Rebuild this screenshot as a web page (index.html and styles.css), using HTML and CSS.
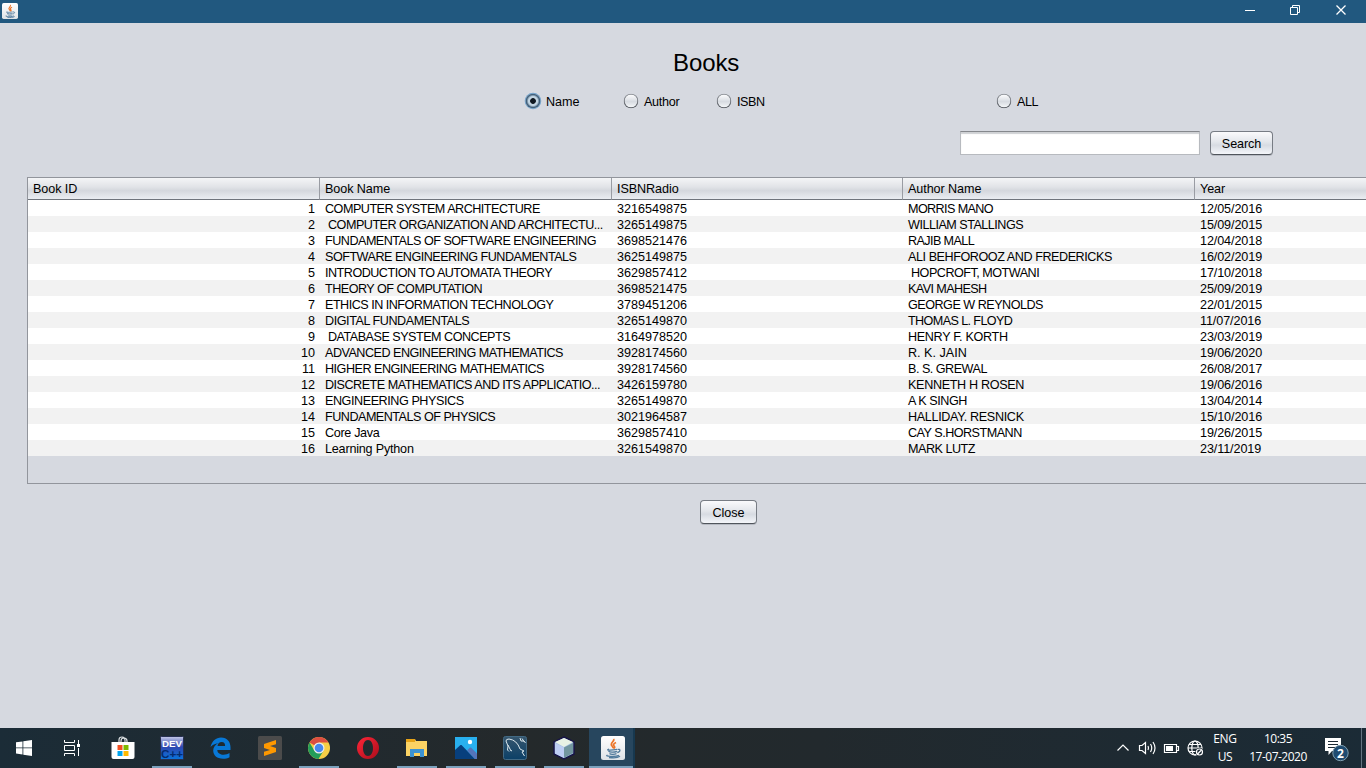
FILE: index.html
```html
<!DOCTYPE html>
<html lang="en">
<head>
<meta charset="utf-8">
<title>Books</title>
<link rel="stylesheet" href="styles.css">
</head>
<body>
<svg class="defs" width="0" height="0">
  <defs>
    <linearGradient id="tile" x2="0" y2="1"><stop stop-color="#fff"/><stop offset="1" stop-color="#dfe3e7"/></linearGradient>
    <linearGradient id="dev" x2="0" y2="1"><stop stop-color="#c7cbe9"/><stop offset=".45" stop-color="#3048b0"/><stop offset="1" stop-color="#0874dc"/></linearGradient>
    <linearGradient id="opera" x2="1" y2="1"><stop stop-color="#ff2638"/><stop offset="1" stop-color="#a90d1b"/></linearGradient>
    <linearGradient id="sql" x2="0" y2="1"><stop stop-color="#36566e"/><stop offset="1" stop-color="#0c4067"/></linearGradient>
    <symbol id="java" viewBox="0 0 24 24">
      <rect width="24" height="24" rx="2.5" fill="url(#tile)"/>
      <path d="M12.500 3c2 2-4.500 4-1.500 7 1 1 1.500 1.500 1 2.500M15 6.500c-3 1.500-3 2.500-1.500 4 .6.8 0 1.500-.5 2" fill="none" stroke="#ec762b" stroke-width="1.700"/>
      <path d="M8 13.200c-4 1 2 1.300 8 .1M7.500 15.200c1 1.300 6 1.300 8.500.2M8.500 17.500c1 1.100 5 1.100 7 .2M16.500 13.500c3-1 3.500 2-.2 3M6.500 19c-4 1.500 8 2.300 11.500.3M8 21.500c4 .6 9 .2 11-1.200" fill="none" stroke="#507a9c" stroke-width="1.300"/>
    </symbol>
  </defs>
</svg>
<header class="titlebar">
  <svg class="app-icon" width="16" height="16"><use href="#java"/></svg>
  <svg class="window-controls" width="138" height="23" fill="none" stroke="#fff">
    <path d="M17 10.500h10M62.500 7.500h7v7h-7zM64.500 7.500v-2h7v7h-2"/><path d="M108.500 5.500l9 9m0-9l-9 9" stroke-width="1.300"/>
  </svg>
</header>
<main class="content">
  <h1>Books</h1>
  <div class="radios">
    <label class="option name"><i class="radio selected"></i><span>Name</span></label>
    <label class="option author"><i class="radio"></i><span>Author</span></label>
    <label class="option isbn"><i class="radio"></i><span>ISBN</span></label>
    <label class="option all"><i class="radio"></i><span>ALL</span></label>
  </div>
  <div class="search"><input class="field" type="text" aria-label="Search text"><button class="button search-button">Search</button></div>
  <section class="table-pane">
    <table>
      <colgroup><col class="c1"><col class="c2"><col class="c3"><col class="c4"><col class="c5"></colgroup>
      <thead><tr><th>Book ID</th><th>Book Name</th><th>ISBNRadio</th><th>Author Name</th><th>Year</th></tr></thead>
      <tbody>
        <tr><td>1</td><td class="tight">COMPUTER SYSTEM ARCHITECTURE</td><td>3216549875</td><td class="tighter">MORRIS MANO</td><td>12/05/2016</td></tr>
        <tr><td>2</td><td class="tight">&nbsp;COMPUTER ORGANIZATION AND ARCHITECTU...</td><td>3265149875</td><td class="tight">WILLIAM STALLINGS</td><td>15/09/2015</td></tr>
        <tr><td>3</td><td class="tight">FUNDAMENTALS OF SOFTWARE ENGINEERING</td><td>3698521476</td><td class="tighter">RAJIB MALL</td><td>12/04/2018</td></tr>
        <tr><td>4</td><td class="tight">SOFTWARE ENGINEERING FUNDAMENTALS</td><td>3625149875</td><td class="medium">ALI BEHFOROOZ AND FREDERICKS</td><td>16/02/2019</td></tr>
        <tr><td>5</td><td class="tight">INTRODUCTION TO AUTOMATA THEORY</td><td>3629857412</td><td class="tight">&nbsp;HOPCROFT, MOTWANI</td><td>17/10/2018</td></tr>
        <tr><td>6</td><td class="tight">THEORY OF COMPUTATION</td><td>3698521475</td><td class="tighter">KAVI MAHESH</td><td>25/09/2019</td></tr>
        <tr><td>7</td><td class="tight">ETHICS IN INFORMATION TECHNOLOGY</td><td>3789451206</td><td class="tight">GEORGE W REYNOLDS</td><td>22/01/2015</td></tr>
        <tr><td>8</td><td class="medium">DIGITAL FUNDAMENTALS</td><td>3265149870</td><td class="tighter">THOMAS L. FLOYD</td><td>11/07/2016</td></tr>
        <tr><td>9</td><td class="tight">&nbsp;DATABASE SYSTEM CONCEPTS</td><td>3164978520</td><td class="loose">HENRY F. KORTH</td><td>23/03/2019</td></tr>
        <tr><td>10</td><td class="tight">ADVANCED ENGINEERING MATHEMATICS</td><td>3928174560</td><td>R. K. JAIN</td><td>19/06/2020</td></tr>
        <tr><td>11</td><td class="tight">HIGHER ENGINEERING MATHEMATICS</td><td>3928174560</td><td class="tight">B. S. GREWAL</td><td>26/08/2017</td></tr>
        <tr><td>12</td><td class="tight">DISCRETE MATHEMATICS AND ITS APPLICATIO...</td><td>3426159780</td><td class="loose">KENNETH H ROSEN</td><td>19/06/2016</td></tr>
        <tr><td>13</td><td class="medium">ENGINEERING PHYSICS</td><td>3265149870</td><td class="medium">A K SINGH</td><td>13/04/2014</td></tr>
        <tr><td>14</td><td class="tight">FUNDAMENTALS OF PHYSICS</td><td>3021964587</td><td class="loose">HALLIDAY. RESNICK</td><td>15/10/2016</td></tr>
        <tr><td>15</td><td class="loose">Core Java</td><td>3629857410</td><td class="tight">CAY S.HORSTMANN</td><td>19/26/2015</td></tr>
        <tr><td>16</td><td class="mixed">Learning Python</td><td>3261549870</td><td class="tight">MARK LUTZ</td><td>23/11/2019</td></tr>
      </tbody>
    </table>
  </section>
  <button class="button close-button">Close</button>
</main>
<footer class="taskbar">
  <div class="slot system"><svg width="16" height="16" fill="#fff"><path d="M0 2.300l6.500-.9v6.100H0zM7.300 1.300L16 0v7.500H7.300zM0 8.300h6.500v6.100L0 13.500zM7.300 8.300H16V16l-8.700-1.300z"/></svg></div>
  <div class="slot system"><svg width="16" height="16" fill="none" stroke="#fff"><path d="M.5 0v2.500h10V0M.5 16v-2.500h10V16M.5 5.500h10v5H.5zM14.500 0v4M14.500 8v8"/><path d="M13 4h3v3h-3z" fill="#fff" stroke="none"/></svg></div>
  <div class="slot first"><svg width="24" height="24"><path d="M8 8V4q0-3 3-3t3 3v4M10 7V5q0-3 3-3t3 3v2" fill="none" stroke="#dce0e2" stroke-width="1.200"/><path d="M.5 6h23v15q0 2-2 2h-19q-2 0-2-2z" fill="#fff"/><path fill="#f25022" d="M6.500 9h5v5h-5z"/><path fill="#7fba00" d="M12.500 9h5v5h-5z"/><path fill="#00a4ef" d="M6.500 15h5v5h-5z"/><path fill="#ffb900" d="M12.500 15h5v5h-5z"/></svg></div>
  <div class="slot open"><svg width="24" height="24"><rect x=".5" y=".5" width="23" height="23" rx="1" fill="url(#dev)" stroke="#263051"/><text class="dev-top" x="2" y="11" textLength="20" lengthAdjust="spacingAndGlyphs">DEV</text><text class="dev-bottom" x="1" y="22" textLength="22" lengthAdjust="spacingAndGlyphs">C++</text></svg></div>
  <div class="slot"><svg width="24" height="24"><path d="M1.500 11C3 5 7 1.500 12 1.500c6.300 0 9.500 4.500 9.500 9.500v3H8.300c.2 3.300 3.200 4.700 6.200 4.700 2.500 0 4.200-.6 6-1.600v4.200c-1.800 1-4 1.500-6.500 1.500-6 0-9.800-3.300-9.800-8.200 0-3.500 2-6 5-7.400C6 7.600 3.500 8.600 1.500 11zm7-1h7.600c0-2.600-1-4-3.400-4-2.300 0-3.800 1.500-4.200 4z" fill="#0878d7"/></svg></div>
  <div class="slot"><svg width="24" height="24"><rect width="24" height="24" rx="1.500" fill="#4b4b4b"/><path d="M6 8l12-4v4.200L12 10l6 2v4L6 20v-4.200l6-1.800-6-2z" fill="#ff9800"/></svg></div>
  <div class="slot open"><svg width="24" height="24"><circle cx="12" cy="12" r="11" fill="#f6ce46"/><path d="M12 12L2.500 6.500A11 11 0 0 1 21.500 6.500H12z" fill="#dc4e41"/><path d="M2.500 6.500A11 11 0 0 0 11.500 23L16.700 14.500 12 17 7.300 14.500z" fill="#239d59"/><circle cx="12" cy="12" r="5.500" fill="#eee"/><circle cx="12" cy="12" r="4.300" fill="#4788ef"/></svg></div>
  <div class="slot"><svg width="24" height="24"><path fill-rule="evenodd" d="M12 1a11 11 0 1 0 0 22 11 11 0 0 0 0-22zm0 3c3 0 5 3.500 5 8s-2 8-5 8-5-3.500-5-8 2-8 5-8z" fill="url(#opera)"/></svg></div>
  <div class="slot open"><svg width="24" height="24"><path d="M1 3h9l1 2h11v15H1z" fill="#fcd364"/><path d="M1 3h9v3H1z" fill="#e8a417"/><path d="M5 21v-8h14v8h-4v-4H9v4z" fill="#3d93d2"/></svg></div>
  <div class="slot open"><svg width="24" height="24"><path d="M1 1h22v22H1z" fill="#28b0ef"/><path d="M1 14L6.500 9h1L21 23H1z" fill="#073f7d"/><path d="M13 14.500l3-3h1l6 6V23h-2z" fill="#5474ba"/><circle cx="16" cy="6" r="2.200" fill="#fff"/></svg></div>
  <div class="slot open"><svg width="24" height="24" fill="none" stroke="#dce8ed"><rect x=".5" y=".5" width="23" height="23" rx="2" fill="url(#sql)" stroke="#426983"/><path d="M6 15.500L4.500 14l.5-4-2-5q0-2 3-2 8 1 11 10l4 2-2 1 2.500 4M5 9l3 6 1-.5M17 2l1 3h3l1.500 2M19 2.500l2 3"/></svg></div>
  <div class="slot open"><svg width="24" height="24" stroke="#171447"><path d="M12 1l10 5v12l-10 5-10-5V6z" fill="#a8c3e4" stroke-width="1.500"/><path d="M3 6l9-4 9 4-9 5z" fill="#e9f2e5" stroke="none"/><path d="M3 7l9 4.500V22l-9-4.500z" fill="#bdcdf3" stroke="none"/><path d="M12 11.500L21 7v10l-9 5z" fill="#72969f" stroke="none"/></svg></div>
  <div class="slot open active"><svg width="24" height="24"><use href="#java"/></svg></div>
  <div class="tray">
    <svg class="tray-icons" width="90" height="22" fill="none" stroke="#fff" stroke-width="1.200">
      <path d="M.5 13.500L6 8l5.500 5.500"/>
      <path d="M22.500 8.500H25l3.500-3v11l-3.500-3h-2.500zM31 9q1 2 0 4M33.500 7q2.500 4 0 8M36 5q4 6 0 12"/>
      <path d="M47.500 7.500h12v8h-12zM60 9.500h1.500v4H60"/><path d="M49 9h7v5h-7z" fill="#fff" stroke="none"/>
      <circle cx="78" cy="11" r="7"/><ellipse cx="78" cy="11" rx="3.200" ry="7"/><path d="M71 11h14M72 7.500h12M72 14.500h9"/><circle cx="82.500" cy="15" r="4.200" fill="#1d2a33" stroke="none"/><circle cx="82.500" cy="15" r="3"/><path d="M80.500 17l4-4"/>
    </svg>
    <div class="lang"><span>ENG</span><span>US</span></div>
    <div class="clock"><span>10:35</span><span class="date">17-07-2020</span></div>
    <svg class="notification" width="26" height="26"><path d="M1 2h16v13H8l-3.500 4v-4H1z" fill="#fff"/><path d="M4 5.500h10M4 8.500h10M4 11.500h7" stroke="#1c2b35"/><circle cx="16.500" cy="17" r="7.700" fill="#1f4b70" stroke="#809eaf"/><text x="13" y="21.500">2</text></svg>
    <i class="peek"></i>
  </div>
</footer>
</body>
</html>
```
FILE: styles.css
```css
* { box-sizing: border-box; }
body { margin: 0; width: 1366px; height: 768px; overflow: hidden; display: flex; flex-direction: column; background: #d6d9e0; color: #000; font: 12.6px/16px "Liberation Sans", Arial, sans-serif; }
.defs { display: block; position: absolute; }
svg { display: block; flex: none; }
.titlebar { height: 23px; flex: none; background: #21587f; display: flex; justify-content: space-between; }
.app-icon { margin: 3px 0 0 2px; }
.content { height: 705px; display: flex; flex-direction: column; }
h1 { margin: 25px 0 0 673px; font-size: 24px; line-height: 30px; font-weight: 400; letter-spacing: -.1px; height: 30px; }
.radios { display: flex; margin: 15px 0 0 525px; height: 16px; }
.option { display: flex; align-items: center; gap: 5px; }
.option span { line-height: 16px; padding-top: 2px; }
.name { width: 98px; }
.author { width: 93px; letter-spacing: -.3px; }
.isbn { width: 280px; letter-spacing: -.4px; }
.all { letter-spacing: -.4px; }
.radio { flex: none; width: 16px; height: 16px; border-radius: 50%; border: 1px solid transparent; background: linear-gradient(#fdfdfe, #d7dbe1 55%, #f6f8fa) padding-box, linear-gradient(#91959b, #54585f) border-box; transform: scale(.92); }
.radio.selected { background: radial-gradient(circle, #101820 0 2.7px, #c3d5e2 3.5px 5px, #42617c 7px); box-shadow: 0 0 0 1px #74a5ce; border: 0; }
.search { display: flex; margin: 22px 0 0 960px; gap: 10px; height: 24px; }
.field { width: 240px; height: 24px; padding: 4px; border: 1px solid #b7babf; border-top: 1px solid #85888d; background: #fff; box-shadow: inset 0 2px 1px #cfd1d4; font: inherit; border-radius: 0; }
.button { display: flex; align-items: center; justify-content: center; padding: 1px 0 0; border: 1px solid #777c84; border-bottom-color: #50555c; border-radius: 4px; background: linear-gradient(#fafafc, #e3e6eb 45%, #d7dbe2 60%, #f4f6fa); font: inherit; color: #000; box-shadow: 0 1px 0 #b6bac2; }
.search-button { width: 63px; height: 24px; letter-spacing: -.1px; }
.table-pane { margin: 22px 0 0 27px; width: 1339px; height: 307px; flex: none; border: 1px solid #92959c; border-right: 0; }
table { border-collapse: separate; border-spacing: 0; table-layout: fixed; width: 1338px; }
.c1, .c2 { width: 292px; }
.c3 { width: 291px; }
.c4 { width: 292px; }
.c5 { width: 171px; }
th { height: 22px; padding: 0 0 0 5px; text-align: left; font-weight: 400; border-bottom: 1px solid #6f747c; border-right: 1px solid #999ca3; background: linear-gradient(#f4f5f7, #e1e3e7 43%, #d4d7dd 60%, #eaedf2); line-height: 16px; letter-spacing: -.08px; }
th:last-child { border-right: 0; }
td { height: 16px; padding: 2px 5px 0; line-height: 14px; white-space: nowrap; background: #fff; }
td:first-child { text-align: right; }
td:last-child { letter-spacing: -.1px; }
tr:nth-child(even) td { background: #f2f2f2; }
.mixed { letter-spacing: -.2px; }
.loose { letter-spacing: -.33px; }
.medium { letter-spacing: -.44px; }
.tight { letter-spacing: -.5px; }
.tighter { letter-spacing: -.6px; }
.close-button { width: 57px; height: 24px; margin: 16px 0 0 700px; }
.taskbar { height: 40px; flex: none; display: flex; background: linear-gradient(90deg, #1b2c37, #24292b 38%, #22292d 60%, #1b2b36); color: #fff; }
.slot { width: 49px; height: 40px; display: flex; align-items: center; justify-content: center; background: linear-gradient(#7ba1bd, #7ba1bd) center bottom / 0 2px no-repeat; }
.slot.system { width: 48px; }
.slot.first { margin-left: 2px; }
.slot.open { background-size: 40px 2px; }
.slot.active { width: 46px; margin-left: 1px; padding-left: 4px; background-color: #27465e; background-size: 100% 2px; border-right: 2px solid #17384f; }
.dev-top, .dev-bottom { font: bold 9px "Liberation Sans", sans-serif; fill: #fff; }
.dev-bottom { fill: #052b6e; font-size: 11px; }
.tray { margin-left: auto; display: flex; align-items: center; width: 249px; font: 12px/18px "Open Sans", sans-serif; }
.tray-icons { width: 90px; }
.lang { display: flex; flex-direction: column; width: 30px; margin-left: 3px; align-items: center; letter-spacing: -.35px; }
.clock { display: flex; flex-direction: column; width: 60px; margin-left: 8px; align-items: center; letter-spacing: -.5px; }
.notification { margin: 1px 0 0 16px; font: bold 12px "Open Sans", sans-serif; fill: #fff; }
.peek { width: 1px; height: 40px; margin-left: 11px; background: #637480; }
```
